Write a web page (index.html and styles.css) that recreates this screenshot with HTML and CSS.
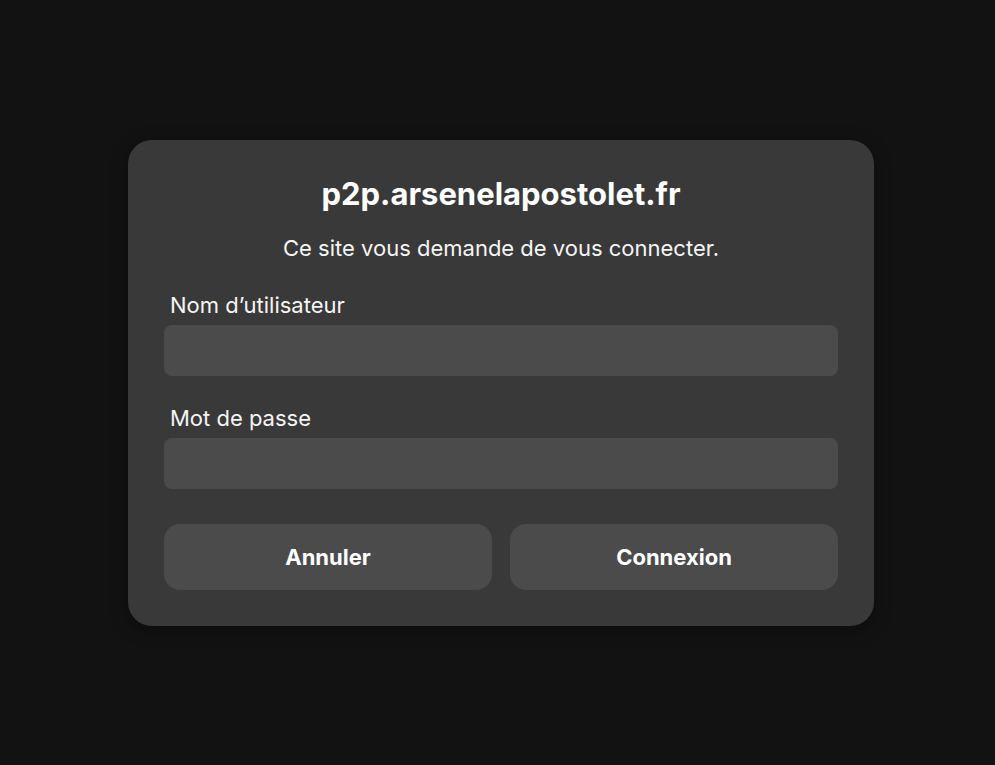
FILE: index.html
```html
<!DOCTYPE html>
<html lang="fr">

<head>
    <meta charset="UTF-8">
    <meta name="viewport" content="width=device-width, initial-scale=1.0">
    <title>Connexion</title>
    <link rel="stylesheet" href="styles.css">
</head>

<body>
    <div class="overlay">
        <div class="dialog">
            <h1 class="host">p2p.arsenelapostolet.fr</h1>
            <p class="message">Ce site vous demande de vous connecter.</p>
            <div class="field">
                <label for="user">Nom d’utilisateur</label>
                <input id="user" type="text">
            </div>
            <div class="field">
                <label for="pass">Mot de passe</label>
                <input id="pass" type="password">
            </div>
            <div class="actions">
                <button class="btn">Annuler</button>
                <button class="btn">Connexion</button>
            </div>
        </div>
    </div>
</body>

</html>
```

FILE: styles.css
```css
* {
    box-sizing: border-box;
}

html,
body {
    margin: 0;
    height: 100%;
}

body {
    background-color: #121212;
    font-family: Inter, 'Noto Sans', sans-serif;
    color: #f5f5f5;
}

.overlay {
    height: 100%;
    display: flex;
    align-items: center;
    justify-content: center;
    padding-left: 7px;
}

.dialog {
    width: 746px;
    background-color: #393939;
    border-radius: 24px;
    padding: 34px 36px 36px;
    box-shadow: 0 4px 18px rgba(0, 0, 0, 0.35);
}

.host {
    margin: 0;
    font-size: 31px;
    line-height: 40px;
    font-weight: 700;
    text-align: center;
    color: #fff;
}

.message {
    margin: 21px 0 0;
    font-size: 22px;
    line-height: 26px;
    text-align: center;
}

.field {
    display: flex;
    flex-direction: column;
    margin-top: 31px;
}

.field + .field {
    margin-top: 29px;
}

.field label {
    font-size: 22px;
    line-height: 26px;
    padding-left: 6px;
    margin-bottom: 7px;
}

.field input {
    height: 51px;
    border: none;
    border-radius: 8px;
    background-color: #4b4b4b;
    color: #fff;
    font: inherit;
    padding: 0 14px;
    outline: none;
}

.actions {
    display: flex;
    gap: 18px;
    margin-top: 35px;
}

.btn {
    flex: 1;
    height: 66px;
    border: none;
    border-radius: 16px;
    background-color: #4b4b4b;
    color: #fff;
    font-family: inherit;
    font-size: 22px;
    font-weight: 700;
    cursor: pointer;
}
```
